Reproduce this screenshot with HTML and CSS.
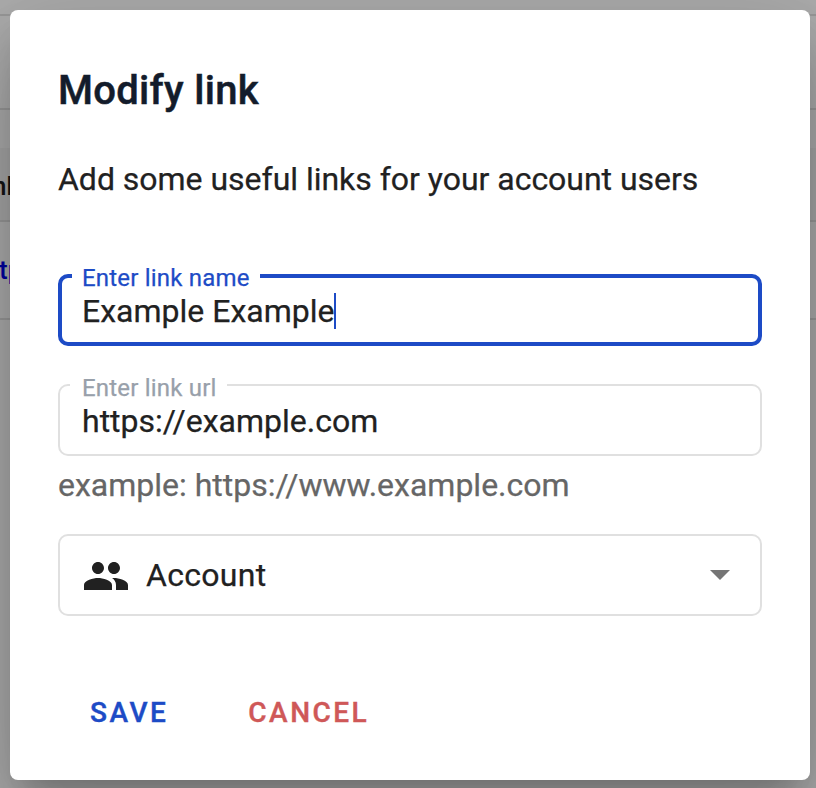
FILE: index.html
```html
<!DOCTYPE html>
<html lang="en">
<head>
<meta charset="utf-8">
<title>Modify link</title>
<link rel="stylesheet" href="styles.css">
</head>
<body>
<div class="page">
  <div class="row row-top"></div>
  <div class="row row-toolbar"></div>
  <div class="row row-head"><span class="head-text">nk</span></div>
  <div class="row row-link"><span class="link-text">tps</span></div>
</div>
<main class="dialog">
  <h1 class="title">Modify link</h1>
  <p class="intro">Add some useful links for your account users</p>
  <div class="field field-focused">
    <span class="label">Enter link name</span>
    <span class="value">Example Example</span><i class="caret"></i>
  </div>
  <div class="field field-url">
    <span class="label">Enter link url</span>
    <span class="value">https://example.com</span>
  </div>
  <p class="hint">example: https://www.example.com</p>
  <div class="select">
    <svg class="people" viewBox="0 0 24 24"><path d="M16 11c1.66 0 2.99-1.34 2.99-3S17.66 5 16 5s-3 1.34-3 3 1.34 3 3 3zm-8 0c1.66 0 2.99-1.34 2.99-3S9.66 5 8 5 5 6.340 5 8s1.340 3 3 3zm0 2c-2.330 0-7 1.170-7 3.500V19h14v-2.500c0-2.330-4.670-3.500-7-3.500zm8 0c-.29 0-.62.020-.97.050 1.160.84 1.970 1.970 1.970 3.450V19h6v-2.500c0-2.330-4.670-3.500-7-3.500z"/></svg>
    <span class="select-text">Account</span>
    <svg class="arrow" viewBox="0 0 20 10"><path d="M0 0h20L10 10z"/></svg>
  </div>
  <div class="actions">
    <button class="button save">SAVE</button>
    <button class="button cancel">CANCEL</button>
  </div>
</main>
</body>
</html>
```
FILE: styles.css
```css
* { box-sizing: border-box; }
body {
  margin: 0;
  height: 788px;
  padding: 10px 6px 8px 10px;
  overflow: hidden;
  font-family: Roboto, sans-serif;
  color: #212121;
}
.page {
  position: absolute;
  inset: 0;
  overflow: hidden;
  background: #adadad;
}
.row { border-bottom: 2px solid #999; }
.row-top { height: 16px; }
.row-toolbar { height: 94px; }
.row-head {
  height: 112px;
  padding-top: 60px;
  background: linear-gradient(transparent 38px, #a7a7a7 38px);
}
.row-link { height: 98px; padding-top: 32px; }
.head-text, .link-text {
  display: block;
  margin-left: -8px;
  font-size: 26px;
  line-height: 32px;
  font-weight: 500;
  color: #151515;
}
.link-text { margin-left: -1px; color: #0000a0; }
.dialog {
  position: relative;
  width: 800px;
  height: 770px;
  padding: 49px 48px 47px;
  border-radius: 8px;
  background: #fff;
  box-shadow: 0 22px 30px -14px rgba(0,0,0,.2), 0 48px 76px 6px rgba(0,0,0,.14), 0 18px 92px 16px rgba(0,0,0,.12);
}
.title {
  margin: 0;
  font-size: 40px;
  line-height: 64px;
  font-weight: 500;
  letter-spacing: .3px;
  -webkit-text-stroke: .5px #131c2b;
  color: #131c2b;
}
.intro {
  margin: 32px 0 0;
  font-size: 32px;
  line-height: 48px;
  letter-spacing: -.02px;
}
.intro, .value, .hint, .select-text, .label { -webkit-text-stroke: .25px currentColor; }
.field {
  position: relative;
  display: flex;
  align-items: center;
  height: 72px;
  padding: 2px 22px 0;
  border: 2px solid #e0e0e0;
  border-radius: 10px;
  font-size: 32px;
}
.field-focused {
  margin-top: 71px;
  padding: 2px 20px 0;
  border: 4px solid #1d4bc6;
}
.field-url { margin-top: 38px; }
.label {
  position: absolute;
  top: -13px;
  left: 10px;
  padding: 0 10px 0 12px;
  background: #fff;
  font-size: 24px;
  line-height: 30px;
  letter-spacing: .2px;
  color: #98a0aa;
}
.field-focused .label { top: -15px; padding-left: 10px; color: #1d4bc6; }
.value { line-height: 38px; }
.caret { width: 2px; height: 36px; background: #1d4bc6; }
.hint {
  margin: 5px 0 0;
  font-size: 32px;
  line-height: 48px;
  color: #666;
}
.select {
  display: flex;
  align-items: center;
  height: 82px;
  margin-top: 25px;
  padding: 0 30px 0 22px;
  border: 2px solid #e0e0e0;
  border-radius: 10px;
}
.people { width: 48px; height: 48px; margin-top: 2px; fill: #212121; }
.select-text { margin-left: 16px; font-size: 32px; letter-spacing: .3px; }
.arrow { width: 20px; height: 10px; margin-left: auto; fill: #757575; }
.actions { display: flex; gap: 48px; margin-top: 61px; }
.button {
  height: 72px;
  padding: 0 32px;
  border: 0;
  background: none;
  font: 500 28px/72px Roboto, sans-serif;
  letter-spacing: 2.5px;
  -webkit-text-stroke: .4px currentColor;
}
.save { padding-right: 0; color: #1d4bc6; }
.cancel { color: #cf5858; }
```
